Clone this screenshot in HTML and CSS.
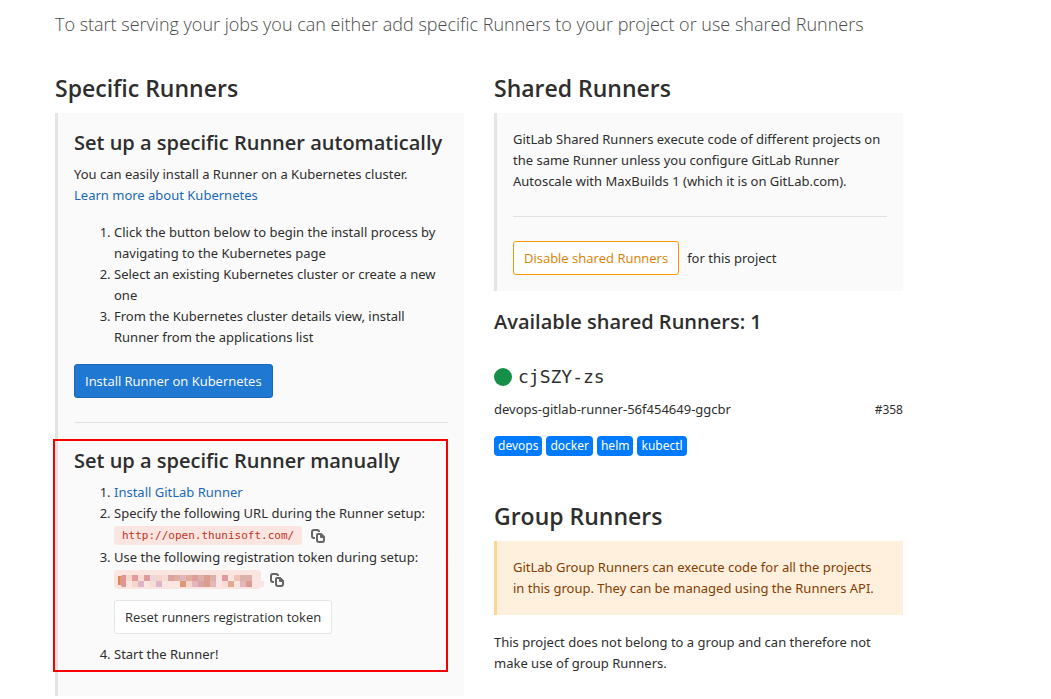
FILE: index.html
```html
<!DOCTYPE html>
<html lang="en">
<head>
<meta charset="utf-8">
<title>Runners</title>
<link rel="stylesheet" href="styles.css">
</head>
<body>
<svg class="defs" aria-hidden="true">
  <symbol id="copy" viewBox="0 0 14 14">
    <path d="M4 9H3a2 2 0 0 1-2-2V3a2 2 0 0 1 2-2h3a2 2 0 0 1 2 2" fill="none" stroke="currentColor" stroke-width="2"/>
    <path d="M7 5h3l3 3v3a2 2 0 0 1-2 2H8a2 2 0 0 1-2-2V6a1 1 0 0 1 1-1z" fill="none" stroke="currentColor" stroke-width="2"/>
    <path d="M9 5h2l2 2v2H10a1 1 0 0 1-1-1z" fill="currentColor"/>
  </symbol>
</svg>
<main class="page">
  <p class="lead">To start serving your jobs you can either add specific Runners to your project or use shared Runners</p>
  <div class="columns">
    <section class="column">
      <h3 class="title">Specific Runners</h3>
      <div class="panel panel-setup">
        <h4 class="subtitle">Set up a specific Runner automatically</h4>
        <p class="text">You can easily install a Runner on a Kubernetes cluster.<br><a class="link" href="#">Learn more about Kubernetes</a></p>
        <ol class="steps">
          <li>Click the button below to begin the install process by navigating to the Kubernetes page</li>
          <li>Select an existing Kubernetes cluster or create a new one</li>
          <li>From the Kubernetes cluster details view, install Runner from the applications list</li>
        </ol>
        <button class="btn btn-primary" type="button">Install Runner on Kubernetes</button>
        <hr class="rule">
        <div class="manual">
          <h4 class="subtitle">Set up a specific Runner manually</h4>
          <ol class="steps">
            <li><a class="link" href="#">Install GitLab Runner</a></li>
            <li>Specify the following URL during the Runner setup:
              <div class="value"><code class="code">http://open.thunisoft.com/</code><button class="copy" type="button" aria-label="Copy URL"><svg><use href="#copy"/></svg></button></div>
            </li>
            <li>Use the following registration token during setup:
              <div class="value"><span class="token"><svg class="mosaic" viewBox="0 0 150 19">
                <path fill="#fbe5e1" d="M138 11h12v6h-12z"/>
                <path fill="#d98a4a" d="M4 6h3v9H4z"/>
                <path fill="#dd9596" d="M8 5h4v12H8L6 14V8z"/>
                <path fill="#f5d5cc" d="M12 5h6v6h-6zM18 11h6v6h-6zM42 5h6v6h-6zM72 11h6v6h-6z"/>
                <path fill="#f7dcd5" d="M24 5h6v6h-6zM36 11h6v6h-6zM48 5h6v6h-6zM108 11h6v6h-6z"/>
                <path fill="#e09c9c" d="M18 5h6v6h-6zM30 5h6v6h-6zM78 5h6v6h-6zM108 5h6v6h-6z"/>
                <path fill="#ddb4c8" d="M24 11h6v6h-6zM42 11h6v6h-6z"/>
                <path fill="#ead8dc" d="M36 5h6v6h-6z"/>
                <path fill="#d9a4a6" d="M54 5h6v6h-6zM84 11h6v6h-6z"/>
                <path fill="#dfae9e" d="M60 5h6v6h-6zM72 5h6v6h-6z"/>
                <path fill="#e2b6ba" d="M66 5h6v6h-6zM78 11h6v6h-6zM96 11h6v6h-6zM126 11h6v6h-6z"/>
                <path fill="#dd9878" d="M66 11h6v6h-6z"/>
                <path fill="#ddb0a8" d="M84 5h6v6h-6zM96 5h6v6h-6zM126 5h6v6h-6zM132 5h6v6h-6z"/>
                <path fill="#d99e8c" d="M90 5h6v12h-6z"/>
                <path fill="#ddaa90" d="M114 11h6v6h-6z"/>
                <path fill="#f0c4b4" d="M120 5h6v6h-6z"/>
                <path fill="#dd9a90" d="M132 11h6v6h-6z"/>
              </svg></span><button class="copy" type="button" aria-label="Copy token"><svg><use href="#copy"/></svg></button></div>
              <button class="btn btn-reset" type="button">Reset runners registration token</button>
            </li>
            <li>Start the Runner!</li>
          </ol>
        </div>
      </div>
    </section>
    <section class="column">
      <h3 class="title">Shared Runners</h3>
      <div class="panel">
        <p class="text">GitLab Shared Runners execute code of different projects on the same Runner unless you configure GitLab Runner Autoscale with MaxBuilds 1 (which it is on GitLab.com).</p>
        <hr class="rule">
        <div class="action"><button class="btn btn-warning" type="button">Disable shared Runners</button><span>for this project</span></div>
      </div>
      <h4 class="subtitle available">Available shared Runners: 1</h4>
      <div class="runner">
        <div class="runner-name"><span class="dot"></span><span>cjSZY-zs</span></div>
        <div class="runner-info"><span>devops-gitlab-runner-56f454649-ggcbr</span><small class="runner-id">#358</small></div>
        <div class="tags"><span class="tag">devops</span><span class="tag">docker</span><span class="tag">helm</span><span class="tag">kubectl</span></div>
      </div>
      <h3 class="title">Group Runners</h3>
      <div class="panel panel-warning">
        <p class="text">GitLab Group Runners can execute code for all the projects<br>in this group. They can be managed using the Runners API.</p>
      </div>
      <p class="text note">This project does not belong to a group and can therefore not make use of group Runners.</p>
    </section>
  </div>
</main>
</body>
</html>
```
FILE: styles.css
```css
* { box-sizing: border-box; }
body { margin: 0; background: #fff; color: #2e2e2e; font: 13px/21px "Noto Sans", "Open Sans", sans-serif; }
h3, h4, p, ol { margin: 0; }
.defs { display: none; }
.page { padding: 8px 148px 2px 55px; }
.lead { font-family: "Open Sans", sans-serif; font-size: 18px; line-height: 32px; font-weight: 300; color: #4a4a4a; }
.columns { display: grid; grid-template-columns: 1fr 1fr; gap: 30px; margin-top: 32px; }
.title { font-family: "Open Sans", sans-serif; font-size: 23px; line-height: 33px; font-weight: 600; margin-bottom: 8px; }
.subtitle { font-family: "Open Sans", sans-serif; font-size: 20px; line-height: 27px; font-weight: 600; }
.panel { background: #fafafa; border-left: 3px solid #e5e5e5; padding: 16px; }
.panel-setup { padding-bottom: 31px; }
.panel .subtitle { margin-bottom: 8px; }
.link { color: #1b69b6; text-decoration: none; }
.steps { margin: 16px 0; padding-left: 40px; }
.btn { display: block; height: 34px; padding: 0 10px; border: 1px solid; border-radius: 3px; font: inherit; font-family: "Open Sans", sans-serif; background: #fff; white-space: nowrap; }
.btn-primary { background: #1f78d1; border-color: #1b69b6; color: #fff; }
.btn-reset { border-color: #e5e5e5; color: #2e2e2e; margin: 9px 0 10px; }
.btn-warning { border-color: #fc9403; color: #de7e00; }
.rule { border: 0; border-top: 1px solid #e1e1e1; margin: 24px 0; }
.manual { position: relative; }
.manual::after { content: ""; position: absolute; top: -8px; left: -21px; right: 0; bottom: -7px; border: 2px solid #f80000; pointer-events: none; }
.manual .steps { margin-top: 0; margin-bottom: 0; }
.value { display: flex; align-items: center; height: 23px; gap: 9px; }
.code { font: 11px/19px "DejaVu Sans Mono", monospace; background: #fbe5e1; color: #c0341d; border-radius: 4px; padding: 0 8px; }
.token { width: 147px; height: 19px; background: #fbe5e1; border-radius: 4px; }
.mosaic { display: block; width: 150px; height: 19px; }
.copy { border: 0; padding: 0; background: none; color: #666; width: 14px; height: 14px; }
.copy svg { display: block; width: 14px; height: 14px; }
.action { display: flex; align-items: center; gap: 8px; }
.available { margin: 17px 0 0; }
.runner { margin-top: 30px; }
.runner-name { display: flex; align-items: center; gap: 6px; font: 18px/24px "DejaVu Sans Mono", monospace; }
.dot { width: 18px; height: 18px; border-radius: 50%; background: #168f48; }
.runner-info { display: flex; justify-content: space-between; margin-top: 10px; }
.runner-id { font-size: 12px; }
.tags { display: flex; gap: 4px; margin: 16px 0 44px; }
.tag { background: #007bff; color: #fff; font-size: 12px; line-height: 20px; padding: 0 4px; border-radius: 4px; }
.panel-warning { background: #fff0de; border-color: #ffd495; color: #853c00; }
.note { margin-top: 17px; }
```
